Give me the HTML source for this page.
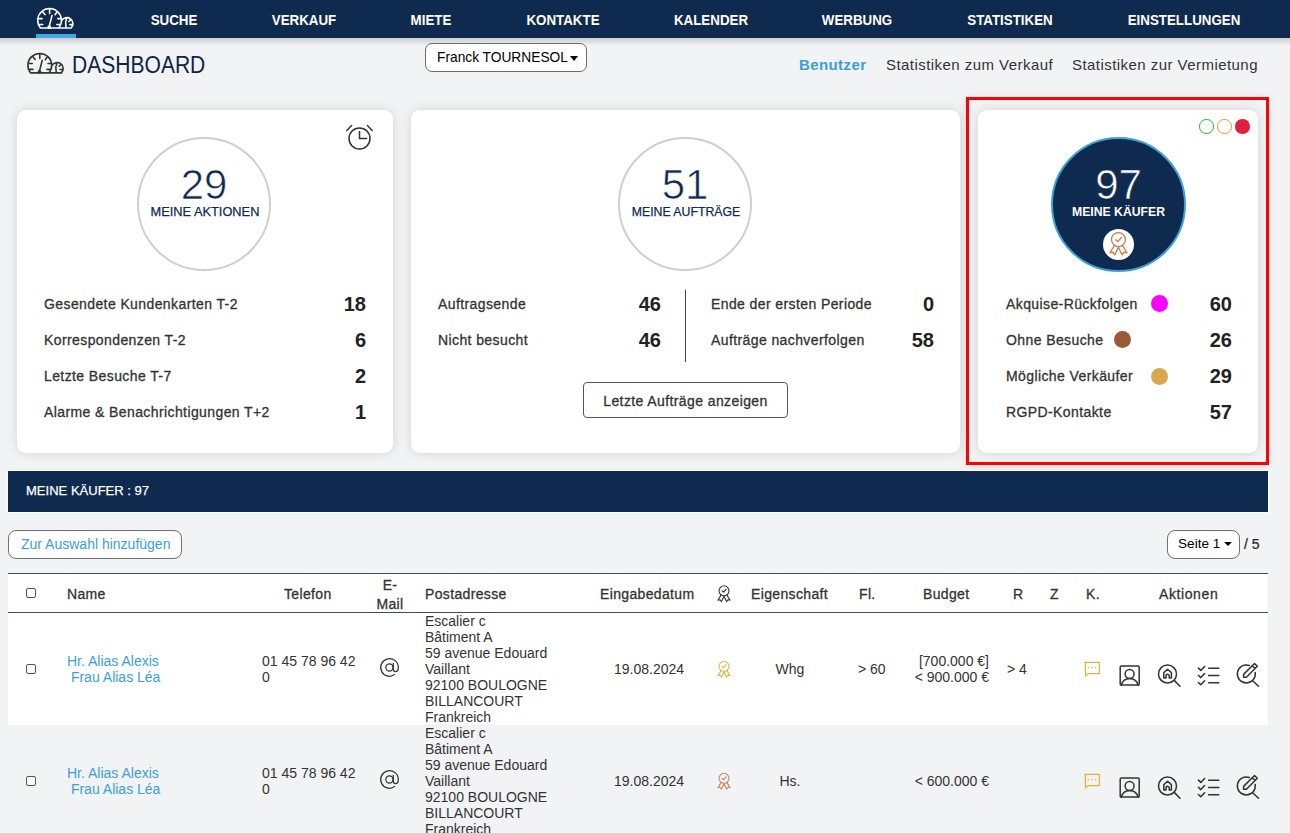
<!DOCTYPE html>
<html><head><meta charset="utf-8">
<style>
*{box-sizing:border-box;margin:0;padding:0}
html,body{width:1290px;height:833px;overflow:hidden;background:#f2f3f5;font-family:"Liberation Sans",sans-serif;color:#333}
.a{position:absolute;white-space:nowrap}
#nav{position:absolute;left:0;top:0;width:1290px;height:38px;background:#0f2a4f}
#navsh{position:absolute;left:0;top:38px;width:1290px;height:8px;background:linear-gradient(rgba(0,0,0,0.16),rgba(0,0,0,0))}
.ni{position:absolute;top:11px;color:#fff;font-weight:bold;font-size:14.5px;line-height:18px;transform:translateX(-50%) scaleX(0.92)}
#uline{position:absolute;left:36px;top:34px;width:40px;height:4px;background:#3fa9e0}
.card{position:absolute;top:110px;height:343px;background:#fff;border-radius:9px;box-shadow:0 0 12px rgba(0,0,0,0.13)}
.lbl{position:absolute;font-size:14px;line-height:18px;color:#333;letter-spacing:0.4px;-webkit-text-stroke:0.3px #333}
.num{position:absolute;font-size:20px;line-height:22px;font-weight:bold;color:#222;text-align:right}
.th{position:absolute;top:585px;font-size:14px;line-height:18px;color:#333;letter-spacing:0.35px;white-space:nowrap;-webkit-text-stroke:0.3px #333}
.cb{position:absolute;left:26px;width:10px;height:10px;border:1px solid #555;border-radius:2px;background:#fff}
.td{position:absolute;font-size:14px;line-height:16px;color:#333;white-space:nowrap}
.lk{color:#3aa0dc}
</style></head><body>
<div id="nav"></div>
<div id="navsh"></div>
<div id="uline"></div>
<div class="ni" style="left:174px">SUCHE</div>
<div class="ni" style="left:304px">VERKAUF</div>
<div class="ni" style="left:431px">MIETE</div>
<div class="ni" style="left:563px">KONTAKTE</div>
<div class="ni" style="left:711px">KALENDER</div>
<div class="ni" style="left:857px">WERBUNG</div>
<div class="ni" style="left:1010px">STATISTIKEN</div>
<div class="ni" style="left:1184px">EINSTELLUNGEN</div>

<!-- header -->
<div class="a" style="left:72px;top:52px;font-size:23px;line-height:26px;color:#0d2448;transform:scaleX(0.915);transform-origin:0 0">DASHBOARD</div>
<div class="a" style="left:425px;top:43px;width:162px;height:29px;border:1px solid #6b6b6b;border-radius:7px;background:#fff"></div>
<div class="a" style="left:437px;top:50px;font-size:13.75px;line-height:16px;color:#000">Franck TOURNESOL</div>
<div class="a" style="left:570px;top:55.5px;width:0;height:0;border-left:4px solid transparent;border-right:4px solid transparent;border-top:5px solid #000"></div>
<div class="a" style="left:799px;top:56px;font-size:15px;line-height:18px;font-weight:bold;color:#3a9fd8;letter-spacing:0.4px">Benutzer</div>
<div class="a" style="left:886px;top:56px;font-size:15px;line-height:18px;color:#333;letter-spacing:0.45px">Statistiken zum Verkauf</div>
<div class="a" style="left:1072px;top:56px;font-size:15px;line-height:18px;color:#333;letter-spacing:0.45px">Statistiken zur Vermietung</div>

<!-- cards -->
<div class="card" style="left:17px;width:376px"></div>
<div class="card" style="left:411px;width:549px"></div>
<div class="card" style="left:978px;width:280px"></div>
<div class="a" style="left:966px;top:97px;width:303px;height:368px;border:3px solid #ff0000;box-shadow:0 1px 8px rgba(0,0,0,0.09)"></div>


<!-- card1 content -->
<div class="a" style="left:137px;top:137px;width:134px;height:134px;border:2px solid #cfcfcf;border-radius:50%"></div>
<div class="a" style="left:137px;top:163px;width:134px;text-align:center;font-size:42px;line-height:44px;color:#0f2a4f;-webkit-text-stroke:0.7px #fff">29</div>
<div class="a" style="left:138px;top:204px;width:134px;text-align:center;font-size:12.8px;line-height:16px;color:#0f2a4f;-webkit-text-stroke:0.25px #0f2a4f">MEINE AKTIONEN</div>
<svg class="a" style="left:344px;top:122px" width="32" height="32" viewBox="344 122 32 32" fill="none" stroke="#333" stroke-width="1.5" stroke-linecap="round">
<circle cx="359.5" cy="138.5" r="10.5"/><path d="M346.8 130.5L351.6 125.6M367.4 125.6L372.2 130.5M359.5 131.5V138.5H366.3"/></svg>
<div class="lbl" style="left:44px;top:295px">Gesendete Kundenkarten T-2</div>
<div class="lbl" style="left:44px;top:331px">Korrespondenzen T-2</div>
<div class="lbl" style="left:44px;top:367px">Letzte Besuche T-7</div>
<div class="lbl" style="left:44px;top:403px">Alarme &amp; Benachrichtigungen T+2</div>
<div class="num" style="left:300px;width:66px;top:293px">18</div>
<div class="num" style="left:300px;width:66px;top:329px">6</div>
<div class="num" style="left:300px;width:66px;top:365px">2</div>
<div class="num" style="left:300px;width:66px;top:401px">1</div>

<!-- card2 content -->
<div class="a" style="left:618px;top:137px;width:134px;height:134px;border:2px solid #cfcfcf;border-radius:50%"></div>
<div class="a" style="left:618px;top:163px;width:134px;text-align:center;font-size:42px;line-height:44px;color:#0f2a4f;-webkit-text-stroke:0.7px #fff">51</div>
<div class="a" style="left:619px;top:204px;width:134px;text-align:center;font-size:12.8px;line-height:16px;color:#0f2a4f;-webkit-text-stroke:0.25px #0f2a4f;transform:scaleX(0.96)">MEINE AUFTRÄGE</div>
<div class="lbl" style="left:438px;top:295px">Auftragsende</div>
<div class="lbl" style="left:438px;top:331px">Nicht besucht</div>
<div class="num" style="left:595px;width:66px;top:293px">46</div>
<div class="num" style="left:595px;width:66px;top:329px">46</div>
<div class="a" style="left:685px;top:290px;width:1px;height:72px;background:#444"></div>
<div class="lbl" style="left:711px;top:295px">Ende der ersten Periode</div>
<div class="lbl" style="left:711px;top:331px">Aufträge nachverfolgen</div>
<div class="num" style="left:868px;width:66px;top:293px">0</div>
<div class="num" style="left:868px;width:66px;top:329px">58</div>
<div class="a" style="left:583px;top:382px;width:205px;height:36px;border:1px solid #555;border-radius:4px;background:#fff"></div>
<div class="lbl" style="left:583px;top:392px;width:205px;text-align:center">Letzte Aufträge anzeigen</div>

<!-- card3 content -->
<div class="a" style="left:1199px;top:119px;width:14.5px;height:14.5px;border:1.5px solid #18b832;border-radius:50%"></div>
<div class="a" style="left:1217px;top:119px;width:14.5px;height:14.5px;border:1.5px solid #f0913a;border-radius:50%"></div>
<div class="a" style="left:1235px;top:119px;width:14.5px;height:14.5px;background:#e0203f;border-radius:50%"></div>
<div class="a" style="left:1051px;top:137px;width:135px;height:135px;border:2px solid #3fa0d8;background:#0f2a4f;border-radius:50%"></div>
<div class="a" style="left:1051px;top:163px;width:135px;text-align:center;font-size:42px;line-height:44px;color:#fff;-webkit-text-stroke:0.7px #0f2a4f">97</div>
<div class="a" style="left:1051px;top:204px;width:135px;text-align:center;font-size:12.8px;line-height:16px;font-weight:bold;color:#fff;transform:scaleX(0.955)">MEINE KÄUFER</div>
<div class="a" style="left:1103px;top:229px;width:31px;height:31px;background:#fff;border-radius:50%"></div>
<div class="lbl" style="left:1006px;top:295px">Akquise-Rückfolgen</div>
<div class="lbl" style="left:1006px;top:331px">Ohne Besuche</div>
<div class="lbl" style="left:1006px;top:367px">Mögliche Verkäufer</div>
<div class="lbl" style="left:1006px;top:403px">RGPD-Kontakte</div>
<div class="a" style="left:1151px;top:295px;width:17px;height:17px;background:#ff00ff;border-radius:50%"></div>
<div class="a" style="left:1114px;top:331px;width:17px;height:17px;background:#9a5a36;border-radius:50%"></div>
<div class="a" style="left:1151px;top:368px;width:17px;height:17px;background:#d6aa4c;border-radius:50%"></div>
<div class="num" style="left:1166px;width:66px;top:293px">60</div>
<div class="num" style="left:1166px;width:66px;top:329px">26</div>
<div class="num" style="left:1166px;width:66px;top:365px">29</div>
<div class="num" style="left:1166px;width:66px;top:401px">57</div>

<!-- navy bar -->
<div class="a" style="left:8px;top:471px;width:1260px;height:41px;background:#0f2a4f;box-shadow:0 0 0 1px rgba(255,255,255,0.8)"></div>
<div class="a" style="left:26px;top:483px;font-size:13.5px;line-height:16px;color:#fff;-webkit-text-stroke:0.25px #fff;transform:scaleX(0.965);transform-origin:0 0">MEINE KÄUFER : 97</div>


<!-- toolbar -->
<div class="a" style="left:8px;top:530px;width:174px;height:29px;border:1px solid #707070;border-radius:8px;background:#fff"></div>
<div class="a" style="left:21px;top:536px;font-size:14px;line-height:16px;color:#3aa0dc">Zur Auswahl hinzufügen</div>
<div class="a" style="left:1167px;top:530px;width:73px;height:29px;border:1px solid #707070;border-radius:8px;background:#fff"></div>
<div class="a" style="left:1178px;top:536px;font-size:13.6px;line-height:16px;color:#000">Seite 1</div>
<div class="a" style="left:1223.5px;top:541.5px;width:0;height:0;border-left:4px solid transparent;border-right:4px solid transparent;border-top:4.5px solid #000"></div>
<div class="a" style="left:1244px;top:536px;font-size:14px;line-height:16px;color:#222;-webkit-text-stroke:0.2px #222">/ 5</div>

<!-- table header -->
<div class="a" style="left:8px;top:573px;width:1260px;height:152px;background:#fff"></div>
<div class="a" style="left:8px;top:573px;width:1260px;height:1px;background:#3d4b5c"></div>
<div class="a" style="left:8px;top:612px;width:1260px;height:1px;background:#3d4b5c"></div>
<div class="cb" style="top:588px"></div>
<div class="th" style="left:67px">Name</div>
<div class="th" style="left:284px">Telefon</div>
<div class="th" style="left:376px;top:576px;width:28px;text-align:center;line-height:19px">E-<br>Mail</div>
<div class="th" style="left:425px">Postadresse</div>
<div class="th" style="left:600px">Eingabedatum</div>
<div class="th" style="left:751px">Eigenschaft</div>
<div class="th" style="left:859px">Fl.</div>
<div class="th" style="left:923px">Budget</div>
<div class="th" style="left:1013px">R</div>
<div class="th" style="left:1050px">Z</div>
<div class="th" style="left:1086px">K.</div>
<div class="th" style="left:1159px;letter-spacing:0.6px">Aktionen</div>


<!-- row bg -->
<div class="a" style="left:8px;top:613px;width:1260px;height:112px;background:#fff"></div>
<div class="cb" style="top:664px"></div>
<div class="td lk" style="left:67px;top:653px">Hr. Alias Alexis<br>&nbsp;Frau Alias Léa</div>
<div class="td" style="left:262px;top:653px">01 45 78 96 42<br>0</div>
<div class="td" style="left:425px;top:613px">Escalier c<br>Bâtiment A<br>59 avenue Edouard<br>Vaillant<br>92100 BOULOGNE<br>BILLANCOURT<br>Frankreich</div>
<div class="td" style="left:614px;top:661px">19.08.2024</div>
<div class="td" style="left:740px;width:100px;text-align:center;top:661px">Whg</div>
<div class="td" style="left:858px;top:661px">&gt; 60</div>
<div class="td" style="left:889px;width:100px;text-align:right;top:653px">[700.000 €]<br>&lt; 900.000 €</div>
<div class="td" style="left:1007px;top:661px">&gt; 4</div>
<div class="cb" style="top:776px"></div>
<div class="td lk" style="left:67px;top:765px">Hr. Alias Alexis<br>&nbsp;Frau Alias Léa</div>
<div class="td" style="left:262px;top:765px">01 45 78 96 42<br>0</div>
<div class="td" style="left:425px;top:725px">Escalier c<br>Bâtiment A<br>59 avenue Edouard<br>Vaillant<br>92100 BOULOGNE<br>BILLANCOURT<br>Frankreich</div>
<div class="td" style="left:614px;top:773px">19.08.2024</div>
<div class="td" style="left:740px;width:100px;text-align:center;top:773px">Hs.</div>
<div class="td" style="left:889px;width:100px;text-align:right;top:773px">&lt; 600.000 €</div>

<svg class="a" style="left:0;top:0" width="1290" height="833" viewBox="0 0 1290 833" fill="none" stroke-linecap="round" stroke-linejoin="round">
<defs>
<g id="gauge">
<path d="M3.2 20.2A11.9 11.9 0 1 1 21.6 20.2M3.2 20.2H34.2M24.3 13A6.1 6.1 0 1 1 34 20.2M12.4 1.2V5.8M5.6 4.3L7.8 6.8M20 3.9L17.9 7M1.3 10.8H4.9M20.6 10.8H24M1.2 16.7H5.6M19.6 16.7H23.4M12.1 18.3L14.8 7.7M29.1 10.2V12.8M33.6 11.8L31.8 13.6M32.6 16.8H35.8M28.8 19.5L28.4 13.8"/>
<circle cx="12.1" cy="19.2" r="1.1"/>
</g>
<g id="ribbon">
<circle cx="7" cy="5.8" r="5"/>
<path d="M5 5.9L6.5 7.2L9.1 4.3M4.2 9.9L0.9 15.2L3.1 14.8L4.4 16.7L7 11.2L9.6 16.7L10.9 14.8L13.1 15.2L9.8 9.9"/>
</g>
<g id="acts">
<path stroke="#e8b230" stroke-width="1.2" d="M1084.8 662.4H1099.4V673.6H1088.2L1085.4 676V662.4Z"/>
<g fill="#e8b230" stroke="none"><circle cx="1088.3" cy="667.8" r="0.8"/><circle cx="1092" cy="667.8" r="0.8"/><circle cx="1095.7" cy="667.8" r="0.8"/></g>
<g stroke="#333" stroke-width="1.5">
<rect x="1120.2" y="665.9" width="19" height="19.2" rx="1.2"/>
<circle cx="1129.6" cy="674" r="4.5"/>
<path d="M1121.2 685.2C1122.6 680.8 1126 678.6 1129.7 678.6C1133.4 678.6 1136.8 680.8 1138.3 685.2"/>
<circle cx="1167.5" cy="674" r="9"/>
<path d="M1174.5 680.6L1180 686.2M1163.8 678V672.6L1167.6 669.2L1171.4 672.6V678H1169.2V675.8A1.6 1.6 0 0 0 1166 675.8V678Z"/>
<path d="M1208.6 668.3H1218.8M1208.6 675.5H1218.8M1208.6 682.7H1218.8M1198.4 668.1L1200.8 670.4L1204.6 666.4M1198.4 675.3L1200.8 677.6L1204.6 673.6M1198.4 682.5L1200.8 684.8L1204.6 680.8"/>
<path d="M1255.2 672.4A9 9 0 1 1 1249.4 665.5M1253.4 681.5L1258.6 686.3"/>
<path transform="translate(1243.6 677.2) rotate(-45)" d="M0 0L2 -2H17.4V2H2ZM14.2 -2V2"/>
</g>
</defs>
<use href="#gauge" x="27.4" y="52.7" stroke="#333" stroke-width="1.6"/>
<use href="#gauge" x="37.2" y="7.8" stroke="#fff" stroke-width="1.55"/>
<use href="#ribbon" x="717" y="585" stroke="#333" stroke-width="1.1"/>
<use href="#ribbon" x="717" y="660.5" stroke="#dcb63e" stroke-width="1.05"/>
<use href="#ribbon" x="717" y="772.5" stroke="#c8845e" stroke-width="1.05"/>
<use href="#acts"/>
<use href="#acts" y="112"/>
<g id="at" stroke="#333" stroke-width="1.25"><circle cx="389.4" cy="667.4" r="3.6"/><path d="M393.3 663.3V669C393.3 670.8 394.3 671.6 395.5 671.6C397.2 671.6 398.3 669.8 398.3 667.5A8.8 8.8 0 1 0 394.6 674.6"/></g>
<use href="#at" y="112"/>
<g transform="translate(1108.65 231.5) scale(1.4)"><use href="#ribbon" stroke="#c87b4e" stroke-width="0.9"/></g>
</svg>
</body></html>
